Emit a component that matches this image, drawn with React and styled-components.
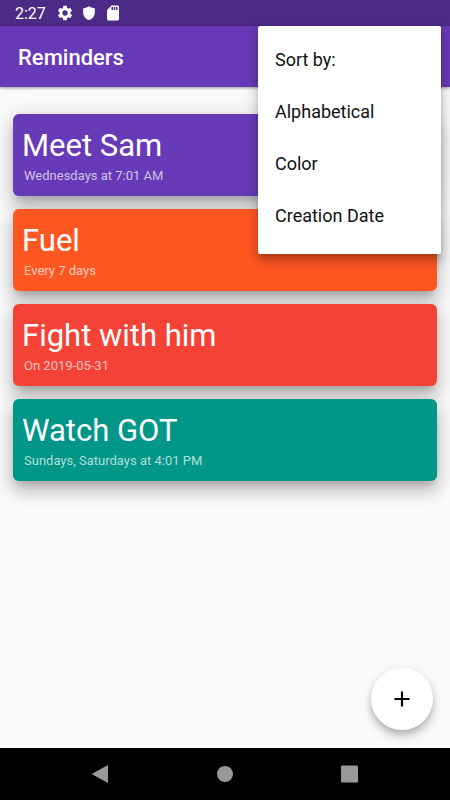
import React, { useState } from 'react';
import styled, { createGlobalStyle } from 'styled-components';
import { MdAdd, MdSdCard, MdSettings } from 'react-icons/md';

const reminders = [
  { title: 'Meet Sam', when: 'Wednesdays at 7:01 AM', color: '#673ab7' },
  { title: 'Fuel', when: 'Every 7 days', color: '#ff5722' },
  { title: 'Fight with him', when: 'On 2019-05-31', color: '#f44336' },
  { title: 'Watch GOT', when: 'Sundays, Saturdays at 4:01 PM', color: '#009688' },
];

const sortOptions = ['Alphabetical', 'Color', 'Creation Date'];

const sorters = {
  Alphabetical: (a, b) => a.title.localeCompare(b.title),
  Color: (a, b) => a.color.localeCompare(b.color),
};

export default function App() {
  const [sort, setSort] = useState('Creation Date');
  const items = sorters[sort] ? [...reminders].sort(sorters[sort]) : reminders;

  return (
    <>
      <GlobalStyle />
      <Screen>
        <StatusBar>
          <time>2:27</time>
          <MdSettings />
          <svg viewBox="-2 -2 28 28" fill="currentColor">
            <path d="M12 1C10 3 6.500 4.300 3 4.600V11.500C3 17 7 21.400 12 23C17 21.400 21 17 21 11.500V4.600C17.500 4.300 14 3 12 1Z" />
          </svg>
          <MdSdCard />
        </StatusBar>
        <AppBar>
          <h1>Reminders</h1>
          <Menu role="menu" aria-label="Sort by">
            <MenuTitle>Sort by:</MenuTitle>
            {sortOptions.map(option => (
              <MenuItem key={option} role="menuitem" onClick={() => setSort(option)}>
                {option}
              </MenuItem>
            ))}
          </Menu>
        </AppBar>
        <List>
          {items.map(item => (
            <Card key={item.title} $color={item.color}>
              <h2>{item.title}</h2>
              <p>{item.when}</p>
            </Card>
          ))}
        </List>
        <Actions>
          <AddButton aria-label="Add reminder">
            <MdAdd />
          </AddButton>
        </Actions>
        <NavBar>
          <NavButton aria-label="Back">
            <svg viewBox="0 0 18 18" fill="currentColor">
              <path d="M17 0.500V17.500Q17 18 16.500 17.800L1.500 9.400Q0.900 9 1.500 8.600L16.500 0.200Q17 0 17 0.500Z" />
            </svg>
          </NavButton>
          <NavButton aria-label="Home">
            <svg viewBox="0 0 18 18" fill="currentColor">
              <circle cx="9" cy="9" r="8" />
            </svg>
          </NavButton>
          <NavButton aria-label="Recent apps">
            <svg viewBox="0 0 18 18" fill="currentColor">
              <rect x="0" y="0.500" width="17" height="17" rx="1.200" />
            </svg>
          </NavButton>
        </NavBar>
      </Screen>
    </>
  );
}

const GlobalStyle = createGlobalStyle`
  * {
    box-sizing: border-box;
  }
  body {
    margin: 0;
    background: #fafafa;
    font-family: Roboto, sans-serif;
  }
  h1, h2, p, ul {
    margin: 0;
    padding: 0;
  }
  button {
    border: none;
    font-family: inherit;
    cursor: pointer;
  }
`;

const Screen = styled.div`
  min-height: 100vh;
  display: flex;
  flex-direction: column;
`;

const StatusBar = styled.div`
  height: 26px;
  padding: 2px 15px 0;
  display: flex;
  align-items: center;
  gap: 6px;
  background: #4c2b87;
  color: #fff;
  > time {
    margin-right: 4px;
    font-size: 16px;
    line-height: 24px;
  }
  > svg {
    width: 18px;
    height: 18px;
    margin-bottom: 2px;
  }
`;

const AppBar = styled.header`
  position: relative;
  z-index: 1;
  height: 61px;
  padding: 2px 18px 0;
  display: flex;
  align-items: center;
  background: #673ab7;
  color: #fff;
  box-shadow: 0 1px 3px rgba(0, 0, 0, 0.4);
  > h1 {
    font-size: 22px;
    line-height: 28px;
    font-weight: 500;
  }
`;

const Menu = styled.div`
  position: absolute;
  top: 0;
  right: 9px;
  width: 183px;
  padding: 8px 0 12px;
  display: flex;
  flex-direction: column;
  background: #fff;
  border-radius: 2px;
  box-shadow: 0 5px 5px -3px rgba(0, 0, 0, 0.2), 0 8px 10px 1px rgba(0, 0, 0, 0.14),
    0 3px 14px 2px rgba(0, 0, 0, 0.12);
`;

const MenuTitle = styled.div`
  padding: 0 17px;
  font-size: 18px;
  line-height: 52px;
  color: #111;
`;

const MenuItem = styled.button`
  padding: 0 17px;
  background: none;
  text-align: left;
  font-size: 18px;
  line-height: 52px;
  color: #111;
`;

const List = styled.ul`
  flex: 1;
  padding: 27px 13px;
  display: flex;
  flex-direction: column;
  gap: 13px;
  list-style: none;
`;

const Card = styled.li`
  height: 82px;
  padding: 13px 9px 11px;
  border-radius: 6px;
  background: ${({ $color }) => $color};
  color: #fff;
  box-shadow: 0 6px 8px -4px rgba(0, 0, 0, 0.2), 0 11px 16px 1px rgba(0, 0, 0, 0.14),
    0 4px 22px 3px rgba(0, 0, 0, 0.12);
  > h2 {
    font-size: 31px;
    line-height: 38px;
    font-weight: 400;
  }
  > p {
    padding: 2px;
    font-size: 13px;
    line-height: 18px;
    color: rgba(255, 255, 255, 0.7);
  }
`;

const Actions = styled.div`
  padding: 0 17px 18px;
  display: flex;
  justify-content: flex-end;
`;

const AddButton = styled.button`
  width: 62px;
  height: 62px;
  padding: 0;
  display: flex;
  align-items: center;
  justify-content: center;
  border-radius: 50%;
  background: #fff;
  color: #000;
  box-shadow: 0 4px 6px -1px rgba(0, 0, 0, 0.18), 0 7px 11px rgba(0, 0, 0, 0.14), 0 1px 14px rgba(0, 0, 0, 0.06);
  > svg {
    width: 26px;
    height: 26px;
  }
`;

const NavBar = styled.nav`
  height: 52px;
  padding: 0 38px;
  display: flex;
  align-items: center;
  background: #000;
`;

const NavButton = styled.button`
  flex: 1;
  height: 52px;
  padding: 0;
  display: flex;
  align-items: center;
  justify-content: center;
  background: none;
  color: #999;
  > svg {
    width: 18px;
    height: 18px;
  }
`;
